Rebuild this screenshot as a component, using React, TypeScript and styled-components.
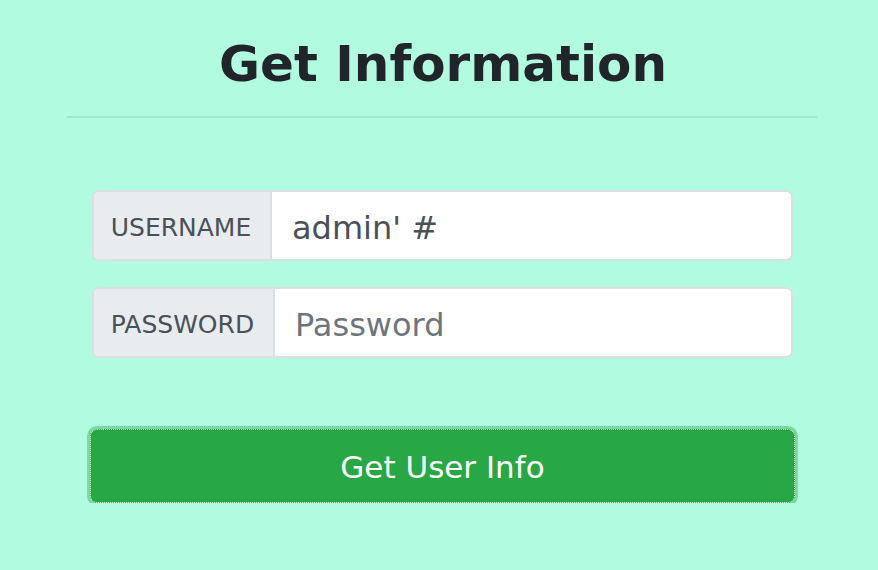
import React from "react";
import styled, { createGlobalStyle } from "styled-components";

const Global = createGlobalStyle`
  html, body { margin: 0; padding: 0; }
  body {
    background: #b1fce1;
    font-family: "DejaVu Sans", Verdana, sans-serif;
    color: #212529;
  }
  * { box-sizing: border-box; }
`;

const Page = styled.div`
  padding: 0 61px 0 67px;
  display: flex;
  flex-direction: column;
`;

const Title = styled.h1`
  margin: 34px 0 0;
  font-size: 50px;
  font-weight: bold;
  line-height: 60px;
  text-align: center;
  padding-left: 2px;
`;

const Divider = styled.hr`
  margin: 22px 0 0;
  border: 0;
  border-top: 2px solid #9ee6cd;
  height: 0;
`;

const Form = styled.form`
  display: flex;
  flex-direction: column;
  padding: 72px 24px 0 25px;
`;

const Group = styled.div<{ $mt?: number }>`
  display: flex;
  height: 71px;
  margin-top: ${(p) => p.$mt ?? 0}px;
  border: 2px solid #dcdfe2;
  border-radius: 7px;
  overflow: hidden;
  background: #fff;
`;

const Label = styled.div<{ $w: number }>`
  width: ${(p) => p.$w}px;
  flex: none;
  display: flex;
  align-items: center;
  justify-content: center;
  background: #e9ecef;
  border-right: 2px solid #dcdfe2;
  color: #495057;
  font-size: 25px;
  padding: 4px 2px 0 0;
`;

const Input = styled.input`
  flex: 1;
  min-width: 0;
  border: 0;
  outline: none;
  padding: 4px 20px 0;
  font-family: "DejaVu Sans", Verdana, sans-serif;
  font-size: 32px;
  color: #495057;
  background: #fff;
  &::placeholder { color: #6c757d; opacity: 1; }
`;

const Button = styled.button`
  margin: 71px 0 0 -2px;
  width: calc(100% + 4px);
  height: 74px;
  background: #28a745;
  color: #fff;
  border: 1px solid #28a745;
  border-radius: 7px;
  font-family: "DejaVu Sans", Verdana, sans-serif;
  font-size: 31px;
  outline: 1.5px dotted #e8fff0;
  outline-offset: -1px;
  box-shadow: 0 0 0 3px rgba(72, 180, 97, 0.5);
  padding: 2px 0 0;
  cursor: pointer;
`;

export default function App() {
  return (
    <>
      <Global />
      <Page>
        <Title>Get Information</Title>
        <Divider />
        <Form onSubmit={(e) => e.preventDefault()}>
          <Group>
            <Label $w={178}>USERNAME</Label>
            <Input defaultValue="admin' #" />
          </Group>
          <Group $mt={26}>
            <Label $w={181}>PASSWORD</Label>
            <Input type="password" placeholder="Password" />
          </Group>
          <Button type="submit">Get User Info</Button>
        </Form>
      </Page>
    </>
  );
}
